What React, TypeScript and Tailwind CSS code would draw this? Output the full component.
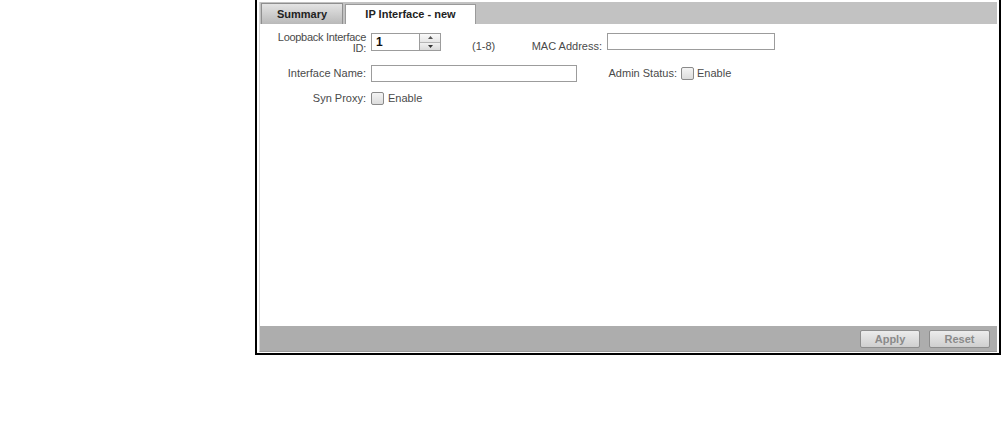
const font = { fontFamily: '"Liberation Sans", Arial, sans-serif' };

const Checkbox = () => (
  <span className="inline-block w-[13px] h-[13px] border border-[#8a8a8a] rounded-[2px] bg-gradient-to-b from-[#f4f4f4] to-[#dcdcdc]" />
);

const Spinner = () => (
  <div className="flex h-[18px] w-[70px]">
    <div className="flex-1 border border-[#9c9c9c] bg-white flex items-center pl-[4px] text-[12px] font-bold text-[#111]">
      1
    </div>
    <div className="w-[21px] flex flex-col border border-l-0 border-[#9c9c9c]">
      <div className="flex-1 flex items-center justify-center bg-gradient-to-b from-[#fafafa] to-[#e6e6e6] border-b border-[#b5b5b5]">
        <svg width="5" height="3" viewBox="0 0 5 3">
          <path d="M2.5 0 L5 3 L0 3 Z" fill="#555" />
        </svg>
      </div>
      <div className="flex-1 flex items-center justify-center bg-gradient-to-b from-[#f0f0f0] to-[#dadada]">
        <svg width="5" height="3" viewBox="0 0 5 3">
          <path d="M0 0 L5 0 L2.5 3 Z" fill="#333" />
        </svg>
      </div>
    </div>
  </div>
);

export default function App() {
  return (
    <div className="w-[1001px] h-[423px] bg-white pl-[255px]" style={font}>
      {/* outer frame */}
      <div className="w-[746px] h-[355px] border-x-2 border-b-2 border-black bg-white pt-[2px] px-[2px] pb-[1px]">
        <div className="h-full flex flex-col border-l border-[#d6d6d6] border-b border-b-[#9a9a9a]">
          {/* tabs */}
          <div className="h-[22px] bg-[#c2c2c2] flex items-end pl-[1px] gap-[2px]">
            <div className="h-[21px] w-[82px] border border-b-0 border-[#8f8f8f] bg-gradient-to-b from-[#e4e4e4] to-[#b9b9b9] flex items-center justify-center text-[11px] font-bold text-[#222]">
              Summary
            </div>
            <div className="h-[20px] w-[131px] border border-b-0 border-[#9a9a9a] bg-white flex items-center justify-center text-[11px] font-bold text-[#222]">
              IP Interface - new
            </div>
          </div>

          {/* form */}
          <div className="flex-1 bg-white pt-[7px] text-[11px] text-[#4a4a4a]">
            <div className="flex items-start">
              <div className="w-[106px] text-right leading-[11px] tracking-[-0.3px] pt-[1px]">
                Loopback Interface
                <br />
                ID:
              </div>
              <div className="ml-[5px] mt-[2px]">
                <Spinner />
              </div>
              <div className="w-[161px] flex items-center justify-between pl-[31px] pt-[7px]">
                <span>(1-8)</span>
                <span>MAC Address:</span>
              </div>
              <div className="ml-[5px] mt-[2px] w-[168px] h-[17px] border border-[#9c9c9c] bg-white" />
            </div>

            <div className="flex items-center mt-[10px] h-[17px]">
              <div className="w-[106px] text-right">Interface Name:</div>
              <div className="ml-[5px] w-[206px] h-[17px] border border-[#9c9c9c] bg-white" />
              <div className="w-[100px] text-right">Admin Status:</div>
              <div className="ml-[4px] flex items-center gap-[3px]">
                <Checkbox />
                <span>Enable</span>
              </div>
            </div>

            <div className="flex items-center mt-[9px] h-[15px]">
              <div className="w-[106px] text-right">Syn Proxy:</div>
              <div className="ml-[5px] flex items-center gap-[4px]">
                <Checkbox />
                <span>Enable</span>
              </div>
            </div>
          </div>

          {/* footer */}
          <div className="h-[25px] bg-[#adadad] flex items-center justify-end gap-[9px] pr-[7px]">
            <button className="w-[60px] h-[18px] border border-[#8d8d8d] rounded-[2px] bg-gradient-to-b from-[#ececec] to-[#cfcfcf] text-[11px] font-bold text-[#8a8a8a]">
              Apply
            </button>
            <button className="w-[61px] h-[18px] border border-[#8d8d8d] rounded-[2px] bg-gradient-to-b from-[#ececec] to-[#cfcfcf] text-[11px] font-bold text-[#8a8a8a]">
              Reset
            </button>
          </div>
        </div>
      </div>
    </div>
  );
}
